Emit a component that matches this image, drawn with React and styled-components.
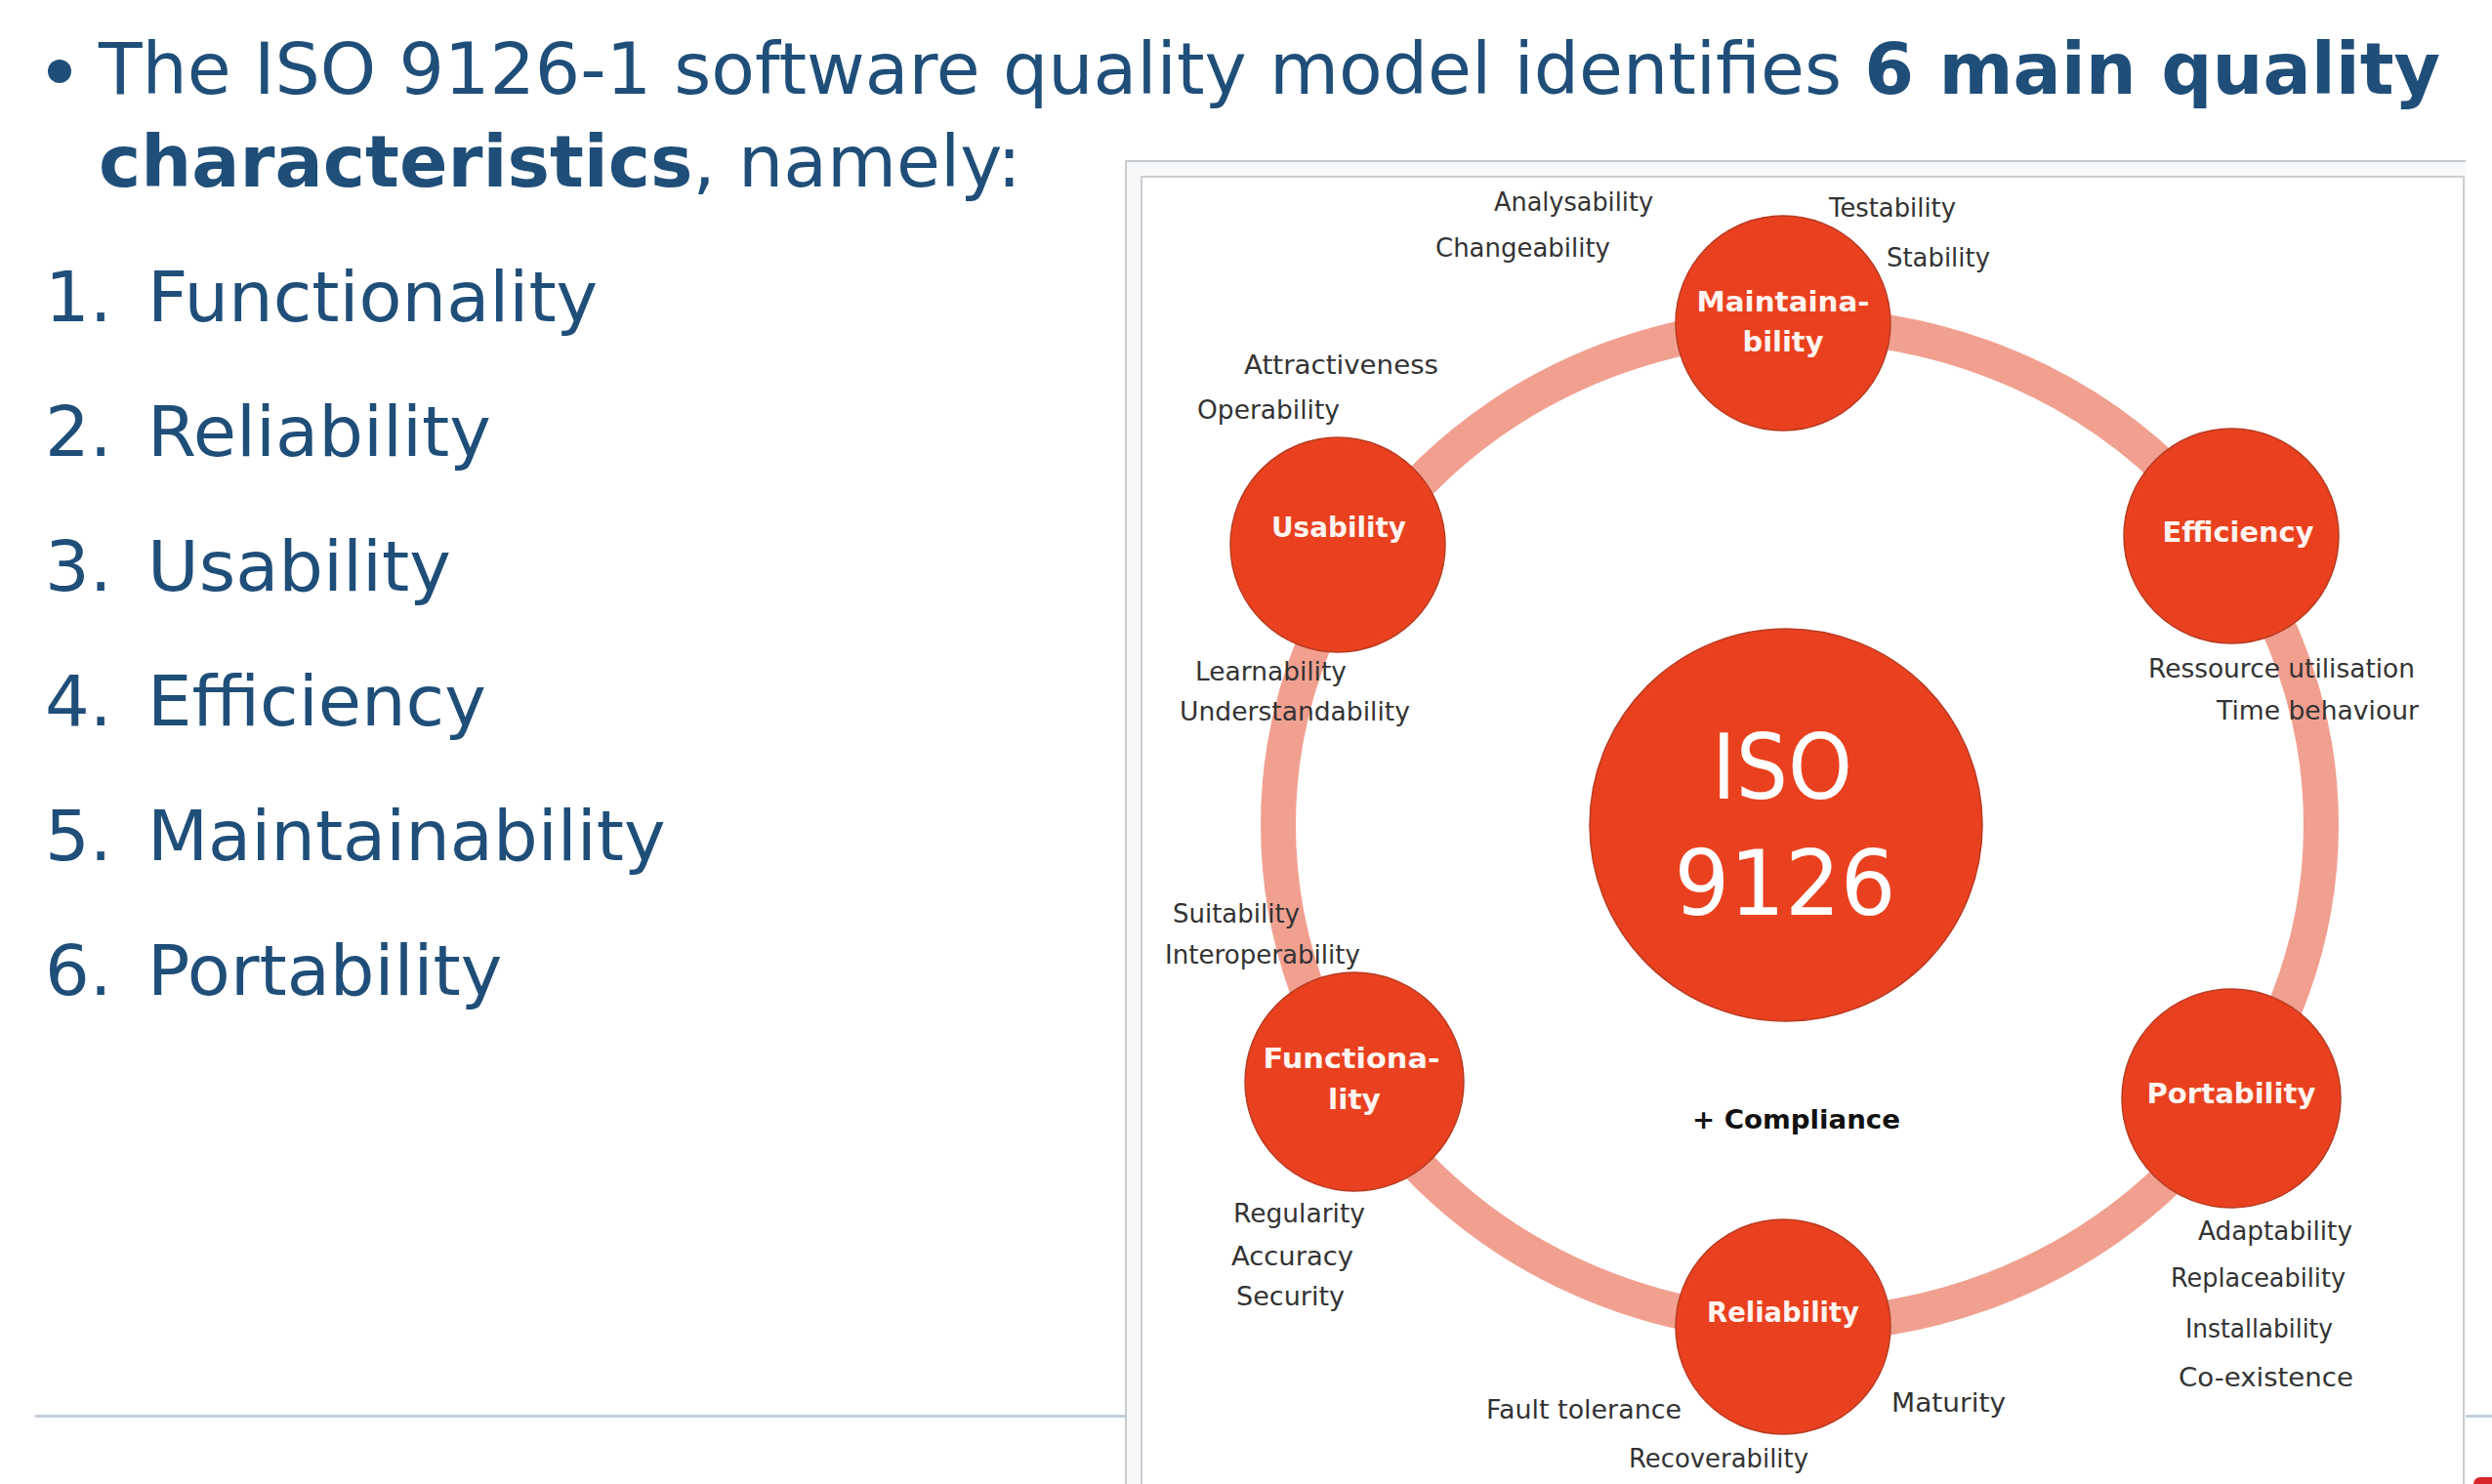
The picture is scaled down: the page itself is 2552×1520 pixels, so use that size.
import React from 'react'
import styled, { createGlobalStyle } from 'styled-components'

const GlobalStyle = createGlobalStyle`
  html, body {
    margin: 0;
    padding: 0;
    background: #ffffff;
    overflow: hidden;
  }
`

const BLUE = '#1f4e79'

const Slide = styled.div`
  width: 2552px;
  height: 1520px;
  overflow: hidden;
  display: grid;
  grid-template-columns: 1152px 1373px 1fr;
  grid-template-rows: auto minmax(0, 1fr);
  font-family: "DejaVu Sans", Verdana, sans-serif;
  color: ${BLUE};
`

const Intro = styled.div`
  grid-column: 1 / -1;
  grid-row: 1;
  display: flex;
  padding-top: 23px;
`

const Bullet = styled.span`
  flex: none;
  width: 24px;
  height: 24px;
  border-radius: 50%;
  background: ${BLUE};
  margin: 38px 28px 0 49px;
`

const IntroText = styled.p`
  margin: 0;
  font-size: 73px;
  line-height: 95px;
`

const List = styled.ol`
  grid-column: 1;
  grid-row: 2;
  list-style: none;
  margin: 0;
  padding: 22px 0 0 46px;
`

const Item = styled.li`
  display: flex;
  height: 138px;
  font-size: 72px;
  line-height: 138px;
  white-space: nowrap;
`

const Num = styled.span`
  flex: none;
  width: 105px;
`

const Rule = styled.div`
  grid-column: 1 / -1;
  grid-row: 2;
  align-self: end;
  height: 3px;
  margin: 0 0 68px 36px;
  background: #c4cfdc;
`

const Corner = styled.div`
  grid-column: 3;
  grid-row: 2;
  align-self: end;
  justify-self: end;
  width: 19px;
  height: 7px;
  background: #d9262b;
  border-top-left-radius: 8px;
`

const Frame = styled.div`
  grid-column: 2;
  grid-row: 2;
  z-index: 1;
  margin-top: -49px;
  padding: 14px 1px 0 14px;
  background: #f7f8fa;
  border-left: 2px solid #c8cacd;
  border-top: 2px solid #c8cacd;
  min-height: 0;
`

const Picture = styled.div`
  height: 1400px;
  background: #ffffff;
  border: 2px solid #cdcfd2;
  border-bottom: none;
`

const Ring = styled.ellipse`
  fill: none;
  stroke: #f1a090;
  stroke-width: 36;
`

const Node = styled.circle`
  fill: #e9411f;
  stroke: #b83b22;
  stroke-width: 1.5;
`

const NodeLabel = styled.text`
  font-family: "DejaVu Sans", sans-serif;
  font-weight: 700;
  font-size: 28px;
  fill: #fff4f0;
  text-anchor: middle;
`

const CoreLabel = styled.text`
  font-family: "DejaVu Sans", sans-serif;
  font-size: 92px;
  fill: #ffffff;
  text-anchor: middle;
`

const Attr = styled.text`
  font-family: "DejaVu Sans", sans-serif;
  font-size: 27px;
  font-weight: ${p => (p.$bold ? 700 : 400)};
  fill: ${p => (p.$bold ? '#111111' : '#333333')};
`

const NODES = [
  { cx: 1826, cy: 331, lines: [{ t: 'Maintaina-', x: 1826, y: 319, w: 177 }, { t: 'bility', x: 1826, y: 360, w: 83 }] },
  { cx: 2285, cy: 549, lines: [{ t: 'Efficiency', x: 2292, y: 555, w: 155 }] },
  { cx: 2285, cy: 1125, r: 112, lines: [{ t: 'Portability', x: 2285, y: 1130, w: 173 }] },
  { cx: 1826, cy: 1359, lines: [{ t: 'Reliability', x: 1826, y: 1354, w: 156 }] },
  { cx: 1387, cy: 1108, r: 112, lines: [{ t: 'Functiona-', x: 1384, y: 1094, w: 181 }, { t: 'lity', x: 1387, y: 1136, w: 54 }] },
  { cx: 1370, cy: 558, lines: [{ t: 'Usability', x: 1371, y: 550, w: 138 }] },
]

const ATTRS = [
  { t: 'Analysability', x: 1530, y: 216, w: 163 },
  { t: 'Changeability', x: 1470, y: 263, w: 179 },
  { t: 'Testability', x: 1873, y: 222, w: 130 },
  { t: 'Stability', x: 1932, y: 273, w: 106 },
  { t: 'Attractiveness', x: 1274, y: 383, w: 199 },
  { t: 'Operability', x: 1226, y: 429, w: 146 },
  { t: 'Learnability', x: 1224, y: 697, w: 155 },
  { t: 'Understandability', x: 1208, y: 738, w: 236 },
  { t: 'Ressource utilisation', x: 2200, y: 694, w: 273 },
  { t: 'Time behaviour', x: 2270, y: 737, w: 207 },
  { t: 'Suitability', x: 1201, y: 945, w: 130 },
  { t: 'Interoperability', x: 1193, y: 987, w: 200 },
  { t: 'Regularity', x: 1263, y: 1252, w: 135 },
  { t: 'Accuracy', x: 1261, y: 1296, w: 125 },
  { t: 'Security', x: 1266, y: 1337, w: 111 },
  { t: 'Adaptability', x: 2251, y: 1270, w: 158 },
  { t: 'Replaceability', x: 2223, y: 1318, w: 179 },
  { t: 'Installability', x: 2238, y: 1370, w: 151 },
  { t: 'Co-existence', x: 2231, y: 1420, w: 179 },
  { t: 'Fault tolerance', x: 1522, y: 1453, w: 200 },
  { t: 'Maturity', x: 1937, y: 1446, w: 117 },
  { t: 'Recoverability', x: 1668, y: 1503, w: 184 },
  { t: '+ Compliance', x: 1733, y: 1156, w: 213, bold: true },
]

const ITEMS = ['Functionality', 'Reliability', 'Usability', 'Efficiency', 'Maintainability', 'Portability']

function Diagram() {
  return (
    <svg width="1352" height="1398" viewBox="1170 182 1352 1398">
      <Ring cx="1843" cy="845" rx="534" ry="512" />
      {NODES.map((n, i) => (
        <g key={i}>
          <Node cx={n.cx} cy={n.cy} r={n.r || 110} />
          {n.lines.map(l => (
            <NodeLabel key={l.t} x={l.x} y={l.y} textLength={l.w} lengthAdjust="spacingAndGlyphs">
              {l.t}
            </NodeLabel>
          ))}
        </g>
      ))}
      <Node cx="1829" cy="845" r="201" />
      <CoreLabel x="1825" y="818" textLength="144" lengthAdjust="spacingAndGlyphs">ISO</CoreLabel>
      <CoreLabel x="1828" y="937" textLength="227" lengthAdjust="spacingAndGlyphs">9126</CoreLabel>
      {ATTRS.map(a => (
        <Attr key={a.t} x={a.x} y={a.y} $bold={a.bold} textLength={a.w} lengthAdjust="spacingAndGlyphs">
          {a.t}
        </Attr>
      ))}
    </svg>
  )
}

export default function App() {
  return (
    <>
      <GlobalStyle />
      <Slide>
        <Intro>
          <Bullet />
          <IntroText>
            The ISO 9126-1 software quality model identifies <b>6 main quality</b> <b>characteristics</b>, namely:
          </IntroText>
        </Intro>

        <List>
          {ITEMS.map((name, i) => (
            <Item key={name}>
              <Num>{i + 1}.</Num>
              {name}
            </Item>
          ))}
        </List>

        <Rule />
        <Corner />

        <Frame>
          <Picture>
            <Diagram />
          </Picture>
        </Frame>
      </Slide>
    </>
  )
}
